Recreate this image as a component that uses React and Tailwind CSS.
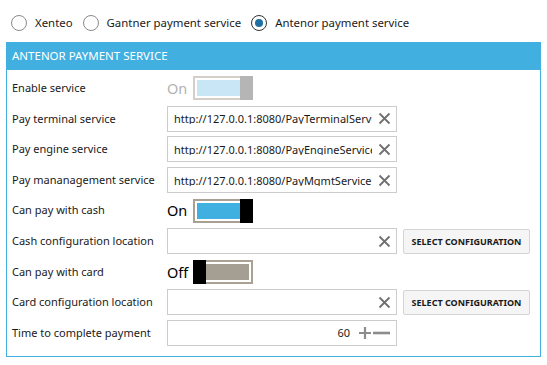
import React from "react";

function Radio({ label, checked }) {
  return (
    <div className="flex items-center">
      <div
        className={`w-[16px] h-[16px] rounded-full border flex items-center justify-center bg-white ${
          checked ? "border-[#333333]" : "border-[#8a8a8a]"
        }`}
      >
        {checked && <div className="w-[8px] h-[8px] rounded-full bg-[#1f6fa3]" />}
      </div>
      <span className="ml-[8px] text-[11.4px] text-[#1a1a1a]">{label}</span>
    </div>
  );
}

function Toggle({ on, label, disabled }) {
  const border = disabled ? "border-[#d4cfc9]" : "border-[#a8a194]";
  const fill = disabled ? "bg-[#c8e6f5]" : on ? "bg-[#3fb0e0]" : "bg-[#a59e93]";
  const thumb = disabled ? "bg-[#b5b5b5]" : "bg-black";
  return (
    <div className="flex items-center">
      <span
        className={`w-[26px] text-[14.5px] leading-none ${
          disabled ? "text-[#b3b3b3]" : "text-black"
        }`}
      >
        {label}
      </span>
      <div className={`relative w-[60px] h-[24px] border-2 ${border} bg-white p-[2px]`}>
        <div className={`w-full h-full ${fill}`} />
        <div
          className={`absolute top-[-2px] bottom-[-2px] w-[13px] ${thumb} ${
            on ? "right-[-2px]" : "left-[-2px]"
          }`}
        />
      </div>
    </div>
  );
}

function XIcon() {
  return (
    <svg width="13" height="13" viewBox="0 0 13 13" className="shrink-0">
      <path d="M1.5 1.5 L11.5 11.5 M11.5 1.5 L1.5 11.5" stroke="#707070" strokeWidth="1.8" />
    </svg>
  );
}

function TextBox({ value }) {
  return (
    <div className="w-[230px] h-[26px] border border-[#cccccc] bg-white flex items-center pl-[6px] pr-[5px]">
      <div className="flex-1 overflow-hidden whitespace-nowrap text-[11px] text-[#1a1a1a] leading-none">
        {value}
      </div>
      <div className="ml-[6px]">
        <XIcon />
      </div>
    </div>
  );
}

function SelectButton() {
  return (
    <button className="ml-[6px] w-[127px] h-[25px] rounded-[2px] border border-[#d4d4d4] bg-[#f5f5f5] text-[9px] font-bold text-[#1a1a1a]">
      SELECT CONFIGURATION
    </button>
  );
}

function Row({ label, children }) {
  return (
    <div className="h-[30.6px] flex items-center">
      <div className="w-[155px] text-[11px] text-[#1a1a1a] whitespace-nowrap">{label}</div>
      <div className="flex items-center">{children}</div>
    </div>
  );
}

export default function App() {
  return (
    <div className="w-[547px] h-[365px] bg-white font-['Segoe_UI','Noto_Sans',sans-serif] overflow-hidden">
      <div className="flex items-center gap-[10px] pl-[11px] pt-[10px] h-[42px] pb-[6px]">
        <Radio label="Xenteo" />
        <Radio label="Gantner payment service" />
        <Radio label="Antenor payment service" checked />
      </div>
      <div className="ml-[6px] w-[535px] border-x border-b border-[#41afdf]">
        <div className="h-[28px] bg-[#41afdf] flex items-center pl-[5px] text-[11.5px] text-white">
          ANTENOR PAYMENT SERVICE
        </div>
        <div className="pl-[5px] pt-[3px] pb-[8px]">
          <Row label="Enable service">
            <Toggle on label="On" disabled />
          </Row>
          <Row label="Pay terminal service">
            <TextBox value="http://127.0.0.1:8080/PayTerminalService" />
          </Row>
          <Row label="Pay engine service">
            <TextBox value="http://127.0.0.1:8080/PayEngineService" />
          </Row>
          <Row label="Pay mananagement service">
            <TextBox value="http://127.0.0.1:8080/PayMgmtService" />
          </Row>
          <Row label="Can pay with cash">
            <Toggle on label="On" />
          </Row>
          <Row label="Cash configuration location">
            <TextBox value="" />
            <SelectButton />
          </Row>
          <Row label="Can pay with card">
            <Toggle on={false} label="Off" />
          </Row>
          <Row label="Card configuration location">
            <TextBox value="" />
            <SelectButton />
          </Row>
          <Row label="Time to complete payment">
            <div className="w-[230px] h-[26px] border border-[#cccccc] bg-white flex items-center justify-end pr-[4px]">
              <span className="text-[11px] text-[#1a1a1a] mr-[8px]">60</span>
              <svg width="34" height="14" viewBox="0 0 34 14">
                <path d="M1 7 H13 M7 1 V13" stroke="#8c8c8c" strokeWidth="2.2" />
                <path d="M15 7 H32" stroke="#8c8c8c" strokeWidth="2.6" />
              </svg>
            </div>
          </Row>
        </div>
      </div>
    </div>
  );
}
